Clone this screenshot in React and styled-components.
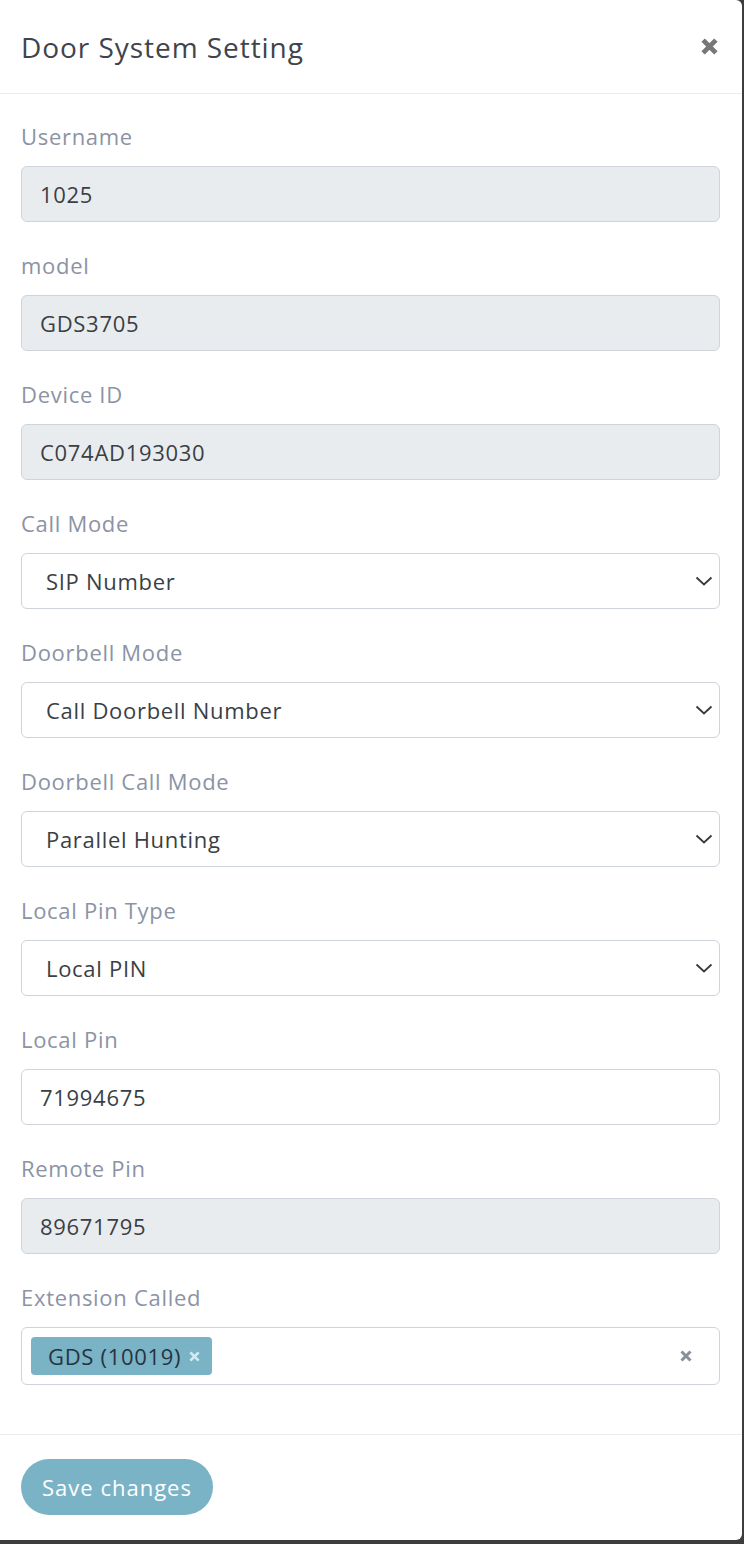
import React from "react";
import styled, { createGlobalStyle } from "styled-components";

const GlobalStyle = createGlobalStyle`
  html, body {
    margin: 0;
    padding: 0;
    background: #3d3d3d;
  }
  * {
    box-sizing: border-box;
  }
`;

const FONT = `"Open Sans", "Noto Sans", sans-serif`;
const TEAL = "#7ab3c6";

const StyledModal = styled.div`
  width: 742px;
  background: #ffffff;
  border-radius: 0 6px 6px 0;
  font-family: ${FONT};
  letter-spacing: 0.7px;
  overflow: hidden;
`;

const StyledHeader = styled.div`
  height: 94px;
  padding: 0 22px 0 21px;
  display: flex;
  align-items: center;
  justify-content: space-between;
  border-bottom: 1px solid #e9ecef;
`;

const StyledTitle = styled.h5`
  margin: 0;
  font-size: 28px;
  font-weight: 400;
  letter-spacing: 0.95px;
  color: #3f444b;
  line-height: 1;
`;

const StyledClose = styled.button`
  border: none;
  background: none;
  padding: 0;
  margin-right: 2px;
  display: flex;
  cursor: pointer;
`;

const StyledBody = styled.div`
  padding: 27px 22px 21px 21px;
`;

const StyledGroup = styled.div`
  margin-bottom: 28px;
`;

const StyledLabel = styled.label`
  display: block;
  height: 30px;
  line-height: 30px;
  margin-bottom: 15px;
  font-size: 22px;
  color: #8b93a5;
`;

const StyledInput = styled.input`
  display: block;
  width: 100%;
  height: 56px;
  padding: 0 18px;
  font-family: ${FONT};
  font-size: 22px;
  letter-spacing: 0.7px;
  color: #3a3f45;
  background: ${(props) => (props.disabled ? "#e9ecef" : "#ffffff")};
  border: 1px solid #ced4da;
  border-radius: 6px;
  outline: none;
  -webkit-text-fill-color: #3a3f45;
  opacity: 1;
`;

const StyledSelectWrap = styled.div`
  position: relative;
`;

const StyledSelect = styled.select`
  display: block;
  width: 100%;
  height: 56px;
  padding: 0 48px 0 24px;
  font-family: ${FONT};
  font-size: 22px;
  letter-spacing: 0.7px;
  color: #3a3f45;
  background: #ffffff;
  border: 1px solid #ced4da;
  border-radius: 6px;
  appearance: none;
  -webkit-appearance: none;
  outline: none;
`;

const StyledChevron = styled.svg`
  position: absolute;
  right: 7px;
  top: 50%;
  margin-top: -5px;
  pointer-events: none;
`;

const StyledTagBox = styled.div`
  height: 58px;
  border: 1px solid #ced4da;
  border-radius: 6px;
  padding: 0 27px 0 9px;
  display: flex;
  align-items: center;
  justify-content: space-between;
`;

const StyledTag = styled.span`
  display: inline-flex;
  align-items: center;
  gap: 8px;
  height: 38px;
  padding: 0 12px 0 17px;
  background: ${TEAL};
  border-radius: 4px;
  font-size: 22px;
  color: #263340;
`;

const StyledFooter = styled.div`
  border-top: 1px solid #e9ecef;
  padding: 24px 21px 25px;
`;

const StyledSaveButton = styled.button`
  height: 56px;
  width: 192px;
  padding: 0;
  border: none;
  border-radius: 28px;
  background: ${TEAL};
  color: #ffffff;
  font-family: ${FONT};
  font-size: 22px;
  letter-spacing: 1px;
  cursor: pointer;
`;

function Cross({ size, color, weight }) {
  return (
    <svg width={size} height={size} viewBox="0 0 12 12">
      <path
        d="M1.5 1.5 L10.5 10.5 M10.5 1.5 L1.5 10.5"
        stroke={color}
        strokeWidth={weight}
        strokeLinecap="butt"
      />
    </svg>
  );
}

function TextField({ label, value, disabled }) {
  return (
    <StyledGroup>
      <StyledLabel>{label}</StyledLabel>
      <StyledInput value={value} disabled={disabled} readOnly />
    </StyledGroup>
  );
}

function SelectField({ label, value }) {
  return (
    <StyledGroup>
      <StyledLabel>{label}</StyledLabel>
      <StyledSelectWrap>
        <StyledSelect value={value} onChange={() => {}}>
          <option>{value}</option>
        </StyledSelect>
        <StyledChevron width="18" height="10" viewBox="0 0 18 10">
          <path
            d="M1.5 1.5 L9 8.5 L16.5 1.5"
            fill="none"
            stroke="#343a40"
            strokeWidth="1.8"
          />
        </StyledChevron>
      </StyledSelectWrap>
    </StyledGroup>
  );
}

export default function App() {
  return (
    <>
      <GlobalStyle />
      <StyledModal>
        <StyledHeader>
          <StyledTitle>Door System Setting</StyledTitle>
          <StyledClose aria-label="Close">
            <Cross size={17} color="#777777" weight={3.4} />
          </StyledClose>
        </StyledHeader>
        <StyledBody>
          <TextField label="Username" value="1025" disabled />
          <TextField label="model" value="GDS3705" disabled />
          <TextField label="Device ID" value="C074AD193030" disabled />
          <SelectField label="Call Mode" value="SIP Number" />
          <SelectField label="Doorbell Mode" value="Call Doorbell Number" />
          <SelectField label="Doorbell Call Mode" value="Parallel Hunting" />
          <SelectField label="Local Pin Type" value="Local PIN" />
          <TextField label="Local Pin" value="71994675" />
          <TextField label="Remote Pin" value="89671795" disabled />
          <StyledGroup>
            <StyledLabel>Extension Called</StyledLabel>
            <StyledTagBox>
              <StyledTag>
                GDS (10019)
                <Cross size={11} color="#d7e8ee" weight={3} />
              </StyledTag>
              <Cross size={12} color="#8a909a" weight={3} />
            </StyledTagBox>
          </StyledGroup>
        </StyledBody>
        <StyledFooter>
          <StyledSaveButton>Save changes</StyledSaveButton>
        </StyledFooter>
      </StyledModal>
    </>
  );
}
